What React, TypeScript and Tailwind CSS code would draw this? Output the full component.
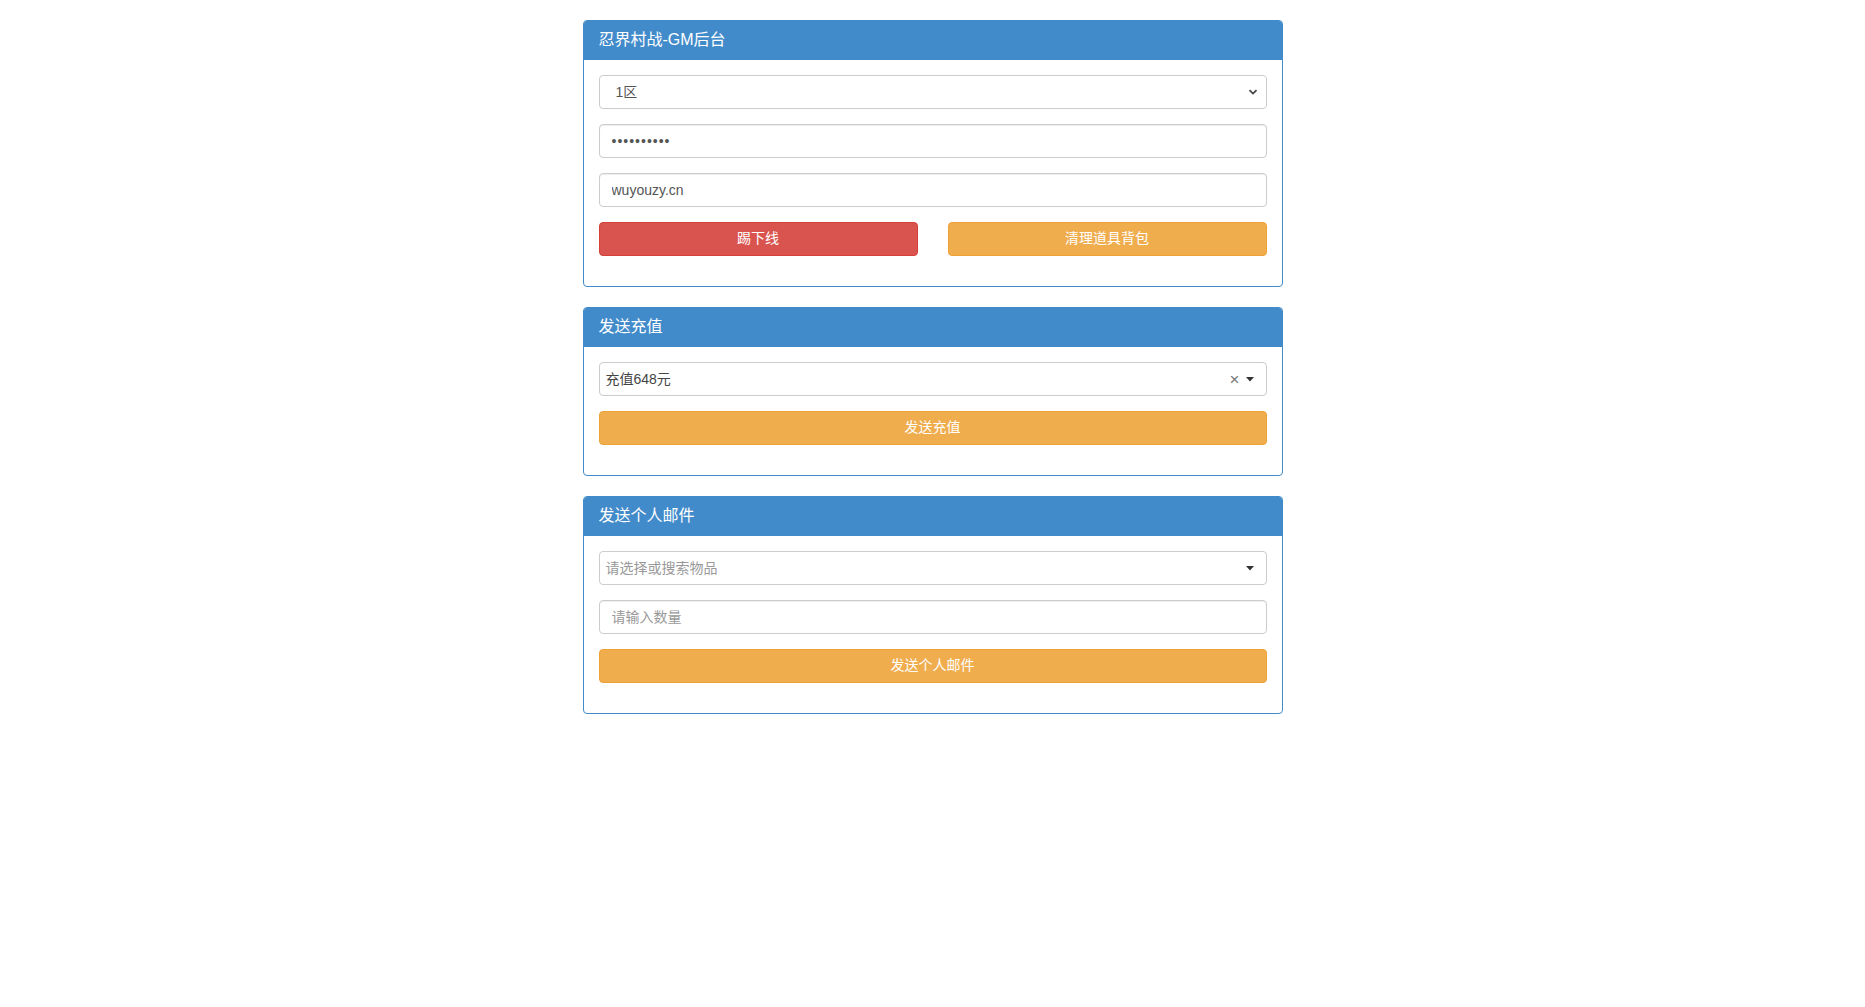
const font = { fontFamily: '"Liberation Sans", "Noto Sans CJK SC", sans-serif' };

function Panel({ title, children }: { title: string; children: React.ReactNode }) {
  return (
    <div className="rounded-[4px] border border-[#428bca] bg-white">
      <div className="flex h-[39px] items-center rounded-t-[3px] bg-[#428bca] px-[15px] pb-[2px] text-[16px] text-white">
        {title}
      </div>
      <div className="p-[15px]">{children}</div>
    </div>
  );
}

function Chevron() {
  return (
    <svg width="12" height="12" viewBox="0 0 12 12" className="text-[#444]">
      <path d="M2.5 4.2 L6 7.6 L9.5 4.2" fill="none" stroke="currentColor" strokeWidth="1.8" />
    </svg>
  );
}

function Caret() {
  return (
    <svg width="8" height="5" viewBox="0 0 8 5">
      <path d="M0 0 L8 0 L4 4.5 Z" fill="#333" />
    </svg>
  );
}

const inputCls =
  'block h-[34px] w-full rounded-[4px] border border-[#ccc] bg-white px-[12px] text-[14px] text-[#555] outline-none shadow-[inset_0_1px_1px_rgba(0,0,0,0.075)]';

const btnOrange =
  'flex h-[34px] w-full items-center justify-center rounded-[4px] border border-[#eea236] bg-[#f0ad4e] pb-[1px] text-[14px] text-white';

export default function App() {
  return (
    <div className="min-h-[1007px] bg-white pt-[20px] text-[14px] text-[#333]" style={font}>
      <div className="mx-auto flex w-[700px] flex-col gap-[20px]">
        <Panel title="忍界村战-GM后台">
          <div className="mb-[15px] flex h-[34px] items-center justify-between rounded-[4px] border border-[#ccc] pl-[16px] pr-[7px] text-[#555]">
            <span>1区</span>
            <Chevron />
          </div>
          <input type="password" readOnly value="1234567890" className={`${inputCls} mb-[15px] text-[8px] tracking-[1px]`} />
          <input type="text" readOnly value="wuyouzy.cn" className={`${inputCls} mb-[15px]`} />
          <div className="mb-[15px] grid grid-cols-2 gap-[30px]">
            <button className="flex h-[34px] items-center justify-center rounded-[4px] border border-[#d43f3a] bg-[#d9534f] pb-[1px] text-[14px] text-white">
              踢下线
            </button>
            <button className={btnOrange}>清理道具背包</button>
          </div>
        </Panel>

        <Panel title="发送充值">
          <div className="mb-[15px] flex h-[34px] items-center justify-between rounded-[4px] border border-[#ccc] pl-[6px] pr-[12px] text-[14px] text-[#444]">
            <span>充值648元</span>
            <div className="flex items-center gap-[6px]">
              <span className="text-[17px] leading-none text-[#777]">×</span>
              <Caret />
            </div>
          </div>
          <button className={`${btnOrange} mb-[15px]`}>发送充值</button>
        </Panel>

        <Panel title="发送个人邮件">
          <div className="mb-[15px] flex h-[34px] items-center justify-between rounded-[4px] border border-[#ccc] pl-[6px] pr-[12px] text-[14px] text-[#999]">
            <span>请选择或搜索物品</span>
            <Caret />
          </div>
          <input type="text" readOnly placeholder="请输入数量" className={`${inputCls} mb-[15px] placeholder:text-[#999]`} />
          <button className={`${btnOrange} mb-[15px]`}>发送个人邮件</button>
        </Panel>
      </div>
    </div>
  );
}
